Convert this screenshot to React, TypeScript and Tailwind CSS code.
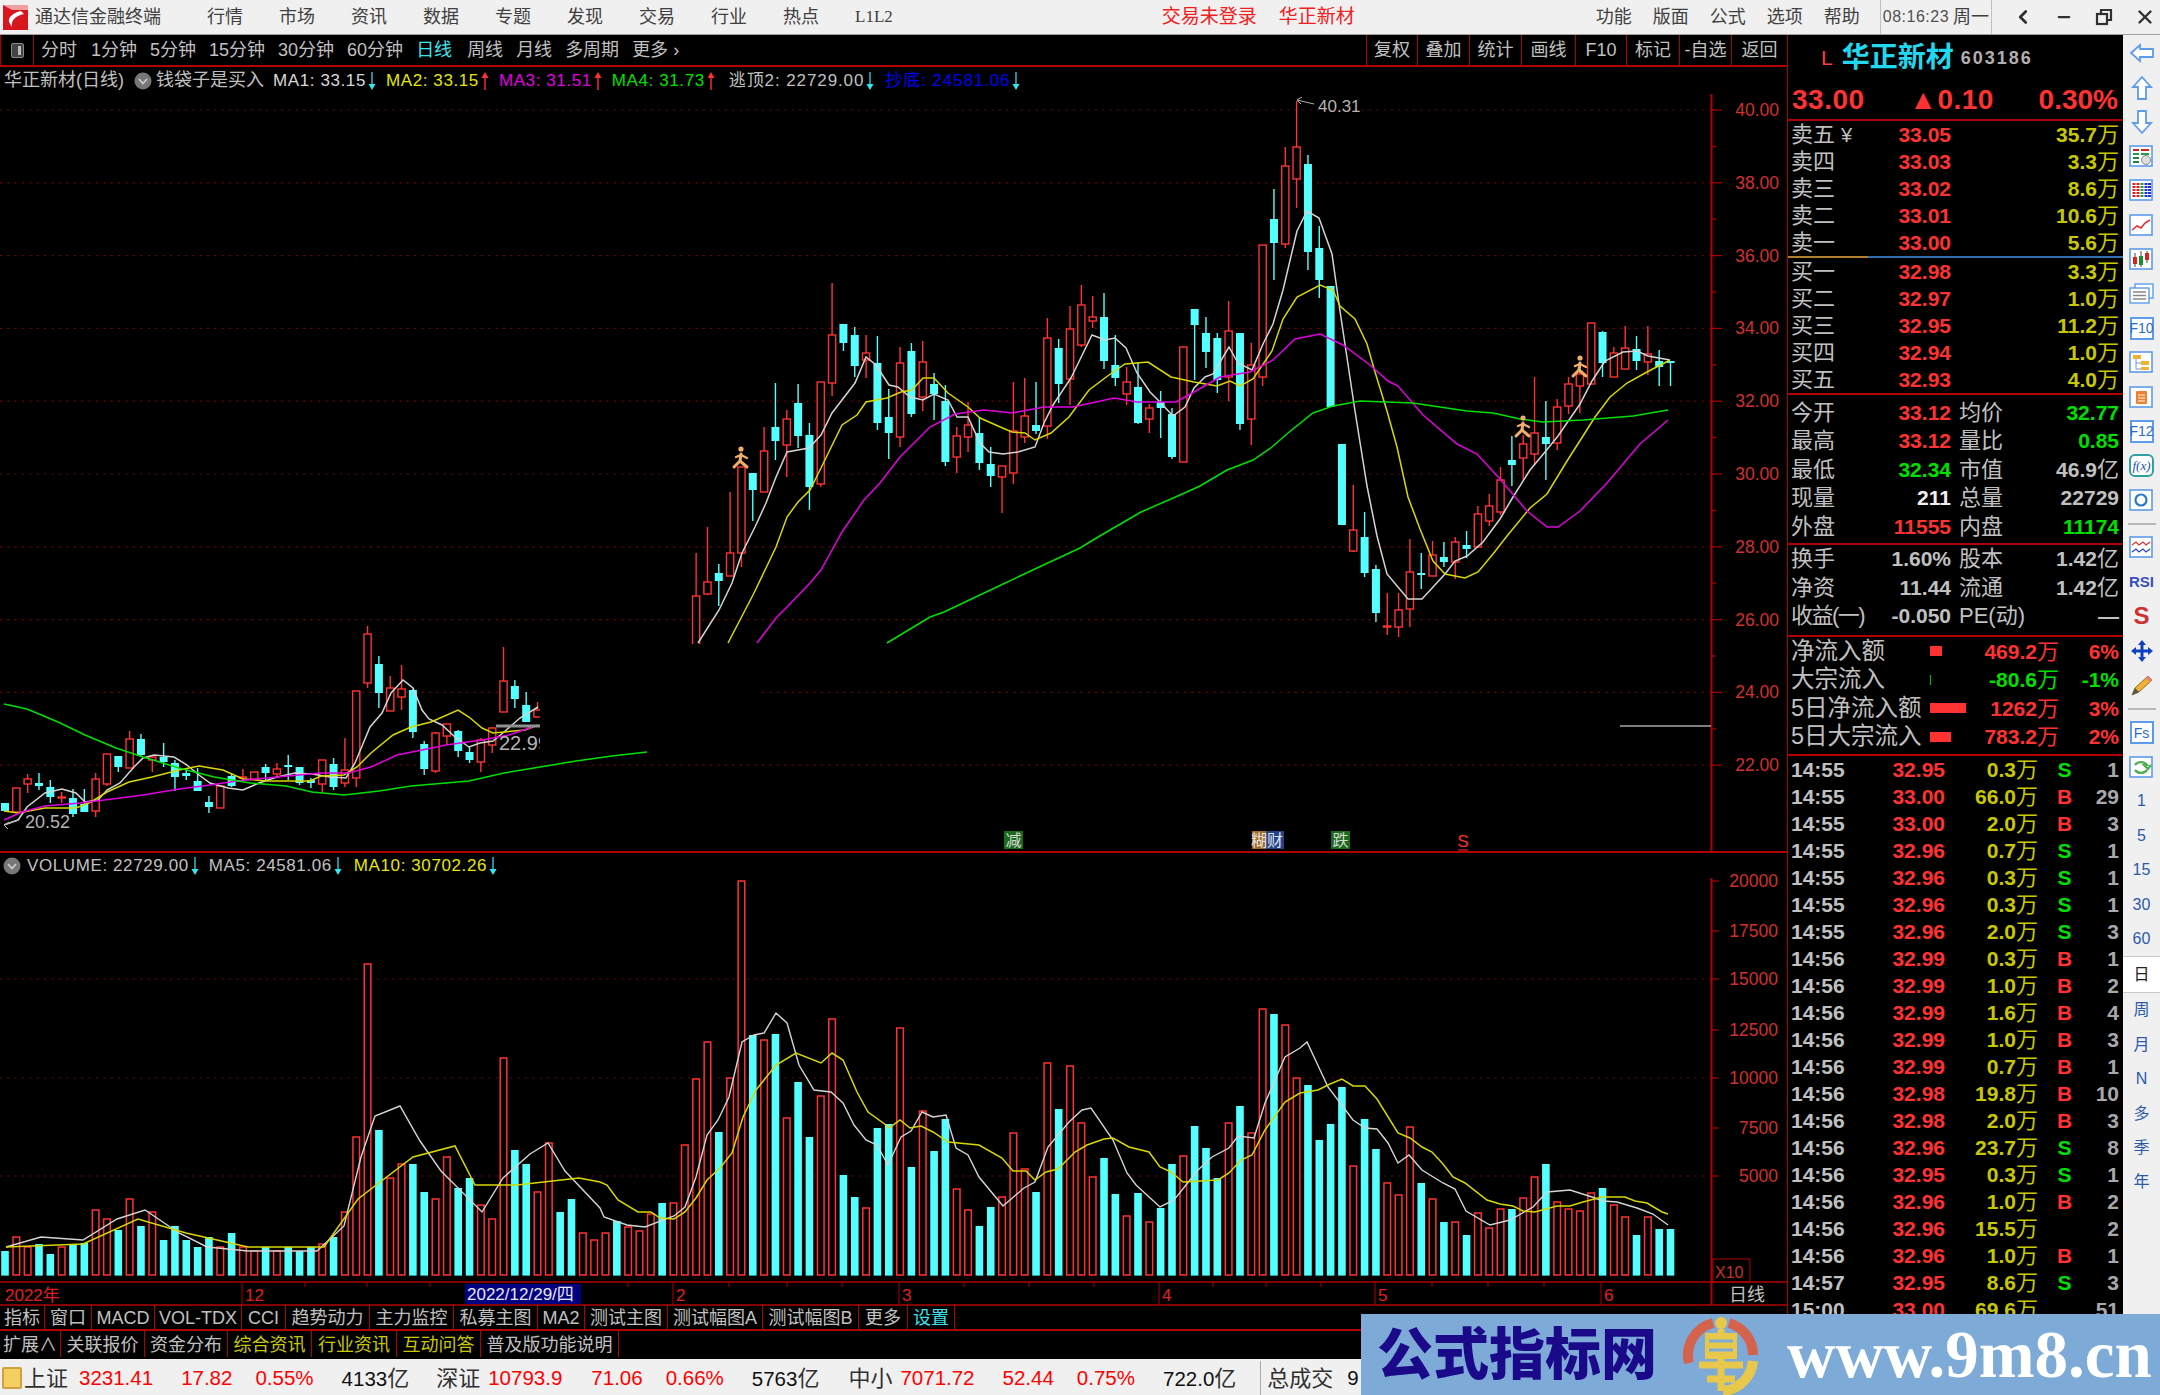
import { ChevronLeft, Minus, X as CloseIcon } from "lucide-react";
import type { ReactNode } from "react";

type Candle = [number, number, number, number, "r" | "c"] | null;

const RED = "#ff3232";
const CYAN = "#54ffff";
const AXIS = "#b00000";

const xAt = (i: number) => 5 + i * 11.33;

// pixel rows: wick top, body top, body bottom, wick bottom
const candles: Candle[] = [
  [803, 803, 811, 811, "c"], [788, 788, 812, 812, "r"], [774, 779, 784, 793, "r"], [773, 783, 786, 790, "c"],
  [780, 787, 797, 803, "c"], [792, 797, 798, 803, "r"], [789, 798, 814, 817, "c"], [789, 804, 812, 812, "c"],
  [773, 779, 811, 817, "r"], [754, 754, 784, 786, "r"], [756, 756, 767, 772, "c"], [731, 739, 768, 768, "r"],
  [734, 739, 755, 757, "c"], [755, 757, 760, 772, "r"], [743, 757, 762, 767, "c"], [760, 763, 777, 791, "c"],
  [768, 773, 776, 780, "c"], [768, 781, 791, 791, "c"], [796, 802, 807, 813, "c"], [786, 786, 808, 808, "r"],
  [773, 776, 786, 787, "c"], [769, 777, 778, 780, "r"], [772, 772, 779, 779, "r"], [764, 767, 773, 780, "c"],
  [763, 769, 774, 777, "r"], [755, 765, 767, 780, "c"], [767, 767, 783, 785, "c"], [778, 780, 783, 788, "c"],
  [760, 760, 784, 793, "r"], [758, 764, 787, 790, "c"], [738, 770, 783, 787, "r"], [691, 691, 778, 787, "r"],
  [626, 634, 683, 688, "r"], [656, 664, 693, 708, "c"], [676, 688, 711, 711, "r"], [665, 689, 697, 710, "r"],
  [689, 690, 732, 738, "c"], [741, 744, 769, 775, "c"], [732, 733, 771, 773, "r"], [724, 724, 736, 745, "r"],
  [730, 731, 751, 757, "c"], [747, 752, 760, 763, "c"], [738, 740, 762, 772, "r"], [727, 728, 745, 753, "r"],
  [647, 681, 712, 712, "r"], [680, 686, 699, 708, "c"], [692, 705, 722, 722, "c"], [702, 710, 717, 717, "r"],
  null, null, null, null, null, null, null, null, null, null, null, null, null,
  [553, 596, 660, 660, "r"], [527, 582, 594, 595, "r"], [564, 573, 581, 606, "c"], [492, 553, 576, 576, "r"],
  [467, 467, 553, 567, "r"], [473, 473, 490, 521, "c"], [427, 451, 492, 492, "r"], [383, 427, 441, 460, "c"],
  [410, 419, 445, 477, "r"], [384, 403, 436, 448, "c"], [423, 435, 487, 510, "c"], [382, 382, 484, 487, "r"],
  [283, 335, 383, 396, "r"], [324, 324, 343, 351, "c"], [327, 335, 366, 377, "c"], [335, 353, 360, 378, "r"],
  [336, 363, 423, 430, "c"], [389, 417, 433, 459, "c"], [347, 363, 437, 447, "r"], [343, 351, 414, 417, "c"],
  [341, 362, 397, 411, "r"], [373, 384, 394, 420, "c"], [385, 401, 462, 466, "c"], [427, 436, 457, 473, "r"],
  [402, 425, 437, 452, "r"], [417, 433, 463, 470, "c"], [447, 464, 476, 487, "c"], [466, 466, 477, 513, "r"],
  [382, 431, 473, 484, "r"], [378, 416, 437, 443, "r"], [382, 425, 431, 434, "c"], [318, 338, 426, 439, "r"],
  [339, 348, 384, 403, "c"], [306, 329, 379, 405, "r"], [285, 305, 345, 347, "r"], [296, 317, 321, 328, "r"],
  [293, 317, 361, 369, "c"], [335, 365, 378, 386, "c"], [367, 382, 394, 405, "r"], [362, 387, 423, 424, "c"],
  [404, 408, 419, 433, "r"], [391, 402, 408, 438, "c"], [408, 414, 457, 459, "c"], [347, 347, 462, 462, "r"],
  [309, 309, 325, 380, "c"], [317, 333, 352, 368, "c"], [333, 338, 380, 393, "c"], [301, 331, 377, 401, "r"],
  [333, 333, 424, 430, "c"], [343, 365, 419, 445, "r"], [245, 245, 377, 386, "r"], [189, 219, 243, 280, "c"],
  [147, 166, 244, 248, "r"], [101, 147, 179, 208, "r"], [155, 164, 252, 270, "c"], [226, 248, 280, 298, "c"],
  [286, 286, 407, 407, "c"], [444, 444, 525, 525, "c"], [485, 530, 551, 552, "r"], [512, 537, 573, 577, "c"],
  [565, 569, 613, 622, "c"], [593, 626, 627, 635, "r"], [593, 610, 627, 637, "r"], [539, 572, 609, 627, "r"],
  [553, 573, 575, 589, "c"], [541, 555, 576, 576, "r"], [542, 557, 562, 567, "c"], [537, 542, 562, 579, "r"],
  [531, 545, 549, 558, "c"], [506, 514, 547, 548, "r"], [494, 506, 521, 526, "r"], [467, 480, 512, 515, "r"],
  [436, 460, 465, 486, "c"], [435, 444, 458, 481, "r"], [377, 433, 454, 465, "r"], [401, 437, 444, 480, "c"],
  [399, 407, 443, 450, "r"], [377, 384, 406, 414, "r"], [365, 374, 386, 413, "r"], [323, 323, 384, 384, "r"],
  [331, 332, 363, 377, "c"], [347, 353, 377, 377, "r"], [326, 348, 369, 369, "r"], [336, 349, 361, 370, "c"],
  [326, 354, 362, 375, "r"], [350, 361, 367, 386, "c"], [361, 361, 363, 386, "c"],
];

const volumeTops = [
  1251, 1237, 1247, 1244, 1254, 1247, 1244, 1243, 1210, 1219, 1230, 1199, 1226, 1212, 1240, 1226, 1240, 1247, 1237, 1247,
  1233, 1247, 1251, 1247, 1251, 1247, 1251, 1247, 1244, 1237, 1212, 1137, 964, 1130, 1178, 1164, 1164, 1192, 1199, 1157,
  1188, 1178, 1205, 1219, 1058, 1150, 1164, 1192, 1143, 1212, 1199, 1233, 1240, 1233, 1221, 1227, 1231, 1214, 1203, 1203,
  1145, 1079, 1042, 1132, 1078, 881, 1035, 1040, 1034, 1118, 1082, 1137, 1096, 1019, 1175, 1197, 1208, 1128, 1124, 1028,
  1167, 1111, 1151, 1119, 1189, 1210, 1226, 1207, 1197, 1133, 1169, 1192, 1063, 1109, 1066, 1123, 1177, 1158, 1194, 1216,
  1193, 1222, 1208, 1164, 1156, 1126, 1148, 1178, 1123, 1106, 1133, 1009, 1014, 1025, 1078, 1085, 1140, 1124, 1087, 1166,
  1119, 1149, 1183, 1195, 1127, 1183, 1199, 1222, 1222, 1235, 1213, 1228, 1209, 1209, 1198, 1177, 1164, 1202, 1209, 1211,
  1193, 1188, 1205, 1217, 1235, 1217, 1229, 1229,
];

// the days hidden behind the erased part of the price pane still have volume bars
const hiddenDayColors = "rccrrrcrrrcrr";

const priceLines = [
  {
    color: "#d4d4d4",
    parts: [
      "4,825 18,820 27,807 45,793 62,789 76,793 85,802 98,800 107,790 120,783 134,767 143,758 154,755 174,757 187,765 199,775 210,783 228,788 243,790 259,783 277,777 295,773 312,774 330,777 346,778 355,763 370,727 382,713 391,693 403,680 413,688 422,710 429,719 442,725 455,737 469,747 480,743 493,741 504,732 520,718 538,707",
      "698,643 719,610 732,583 742,553 755,527 766,503 776,477 787,452 809,448 821,435 832,413 855,383 866,357 876,365 889,385 898,387 910,397 923,400 934,394 948,400 957,417 968,417 980,443 989,452 1003,454 1018,452 1035,447 1044,423 1053,405 1071,378 1092,335 1105,340 1115,338 1126,348 1137,373 1150,392 1160,402 1173,416 1185,407 1194,388 1205,377 1213,374 1229,347 1238,363 1252,370 1263,344 1273,324 1283,290 1297,231 1307,211 1319,218 1332,254 1340,311 1355,411 1367,486 1377,536 1387,574 1408,599 1422,599 1445,574 1455,561 1467,556 1483,542 1500,519 1513,497 1530,470 1545,452 1558,436 1580,404 1592,381 1605,361 1623,352 1637,351 1648,356 1670,360",
    ],
  },
  {
    color: "#d8d800",
    parts: [
      "4,811 18,813 45,808 76,808 91,802 107,792 129,782 152,777 179,770 199,766 223,770 243,779 268,781 310,781 321,776 344,775 357,767 371,753 393,735 411,727 431,722 458,710 469,717 482,728 493,733 525,730 538,725",
      "728,643 741,618 753,595 766,568 776,547 787,517 798,502 810,490 821,468 842,425 857,415 866,402 887,398 901,392 912,390 923,378 934,378 948,393 968,407 980,418 998,426 1012,432 1025,433 1035,440 1051,433 1069,417 1089,390 1109,375 1125,364 1148,362 1171,377 1194,382 1217,386 1230,381 1240,386 1253,379 1272,351 1283,319 1297,297 1320,285 1333,290 1340,306 1355,319 1367,344 1375,372 1387,411 1397,447 1408,497 1420,529 1433,561 1445,574 1465,578 1478,572 1493,554 1507,536 1530,508 1547,494 1567,461 1583,436 1595,417 1610,397 1627,383 1647,372 1670,360",
    ],
  },
  {
    color: "#e000e0",
    parts: [
      "4,820 22,812 45,806 80,803 112,799 143,795 179,789 210,785 237,781 277,777 321,773 348,773 371,767 397,755 422,750 446,745 482,740 509,735 538,725",
      "757,643 776,618 787,607 810,583 821,570 842,532 864,500 880,483 900,457 930,427 955,414 984,410 1012,413 1044,407 1073,407 1114,398 1137,402 1176,402 1194,392 1220,377 1250,372 1273,360 1295,339 1320,334 1343,345 1370,365 1388,381 1398,386 1423,415 1457,444 1477,454 1500,479 1527,511 1547,527 1558,527 1580,511 1607,483 1640,444 1668,420",
    ],
  },
  {
    color: "#00e000",
    parts: [
      "4,704 27,709 58,722 85,735 116,748 143,757 179,768 214,777 250,783 286,786 312,792 344,795 379,791 411,786 469,781 504,773 540,767 576,761 612,756 647,752",
      "887,643 930,617 944,612 1001,585 1037,568 1080,548 1098,537 1141,512 1180,495 1200,486 1227,470 1253,460 1272,447 1288,433 1313,413 1333,406 1360,401 1413,403 1433,406 1467,411 1493,413 1520,419 1543,422 1583,420 1633,416 1668,410",
    ],
  },
];

const volumeWhite =
  "6,1247 41,1237 83,1240 117,1219 145,1210 179,1233 207,1247 248,1251 317,1251 344,1226 361,1157 375,1116 400,1106 420,1141 441,1171 482,1212 503,1178 530,1154 548,1143 565,1171 600,1208 604,1217 627,1225 645,1227 674,1216 685,1207 696,1177 707,1135 718,1120 729,1097 742,1042 754,1035 764,1033 776,1013 787,1023 799,1065 814,1090 831,1092 843,1103 854,1125 866,1140 877,1145 888,1165 901,1137 911,1131 922,1112 933,1117 946,1115 956,1148 968,1155 979,1177 1003,1206 1024,1188 1035,1182 1048,1147 1069,1122 1082,1110 1091,1108 1113,1140 1127,1173 1136,1185 1160,1207 1174,1200 1198,1170 1212,1157 1229,1148 1238,1136 1254,1138 1265,1103 1285,1057 1300,1048 1307,1042 1328,1087 1353,1120 1365,1128 1377,1129 1388,1143 1398,1163 1409,1155 1422,1170 1443,1183 1455,1189 1466,1211 1490,1225 1510,1220 1533,1207 1547,1192 1570,1190 1592,1197 1603,1201 1617,1202 1637,1208 1653,1214 1668,1225";

const volumeYellow =
  "6,1247 83,1244 138,1219 186,1233 248,1247 324,1247 358,1199 413,1157 455,1146 475,1185 517,1185 579,1178 600,1182 607,1185 618,1200 638,1212 651,1212 660,1218 674,1219 685,1212 696,1198 707,1180 720,1168 732,1153 743,1117 756,1090 776,1065 796,1053 821,1063 832,1053 843,1060 857,1092 868,1112 886,1125 889,1128 900,1120 910,1128 921,1126 933,1132 948,1142 979,1145 1002,1158 1013,1171 1026,1171 1035,1180 1046,1172 1058,1169 1075,1152 1087,1145 1104,1139 1113,1138 1129,1147 1149,1152 1160,1167 1171,1172 1183,1182 1218,1180 1229,1173 1241,1160 1252,1155 1265,1130 1285,1102 1300,1093 1318,1090 1330,1084 1342,1079 1353,1086 1365,1086 1377,1099 1398,1133 1410,1138 1422,1147 1432,1152 1443,1164 1453,1177 1465,1183 1487,1200 1500,1204 1513,1206 1523,1211 1535,1212 1557,1206 1570,1206 1583,1202 1602,1197 1625,1197 1635,1201 1647,1203 1662,1212 1668,1214";

const priceLabels = [40, 38, 36, 34, 32, 30, 28, 26, 24, 22];
const priceY = (p: number) => 110 + (40 - p) * 36.4;

function Arrow({ up }: { up?: boolean }) {
  return (
    <svg width="8" height="20" viewBox="0 0 8 20" className="ml-[2px] shrink-0">
      {up ? (
        <>
          <path d="M4 5 V19" stroke="#ff3030" strokeWidth="1.4" />
          <path d="M0.5 7 L4 1 L7.5 7 Z" fill="#ff3030" />
        </>
      ) : (
        <>
          <path d="M4 1 V15" stroke="#30c8e0" strokeWidth="1.4" />
          <path d="M0.5 13 L4 19 L7.5 13 Z" fill="#30e8f0" />
        </>
      )}
    </svg>
  );
}

function Toggle() {
  return (
    <svg width="18" height="18" viewBox="0 0 18 18" className="shrink-0">
      <circle cx="9" cy="9" r="8.5" fill="#777" />
      <path d="M5 7 L9 11.5 L13 7" stroke="#ccc" strokeWidth="1.8" fill="none" />
    </svg>
  );
}

function Runner({ x, y }: { x: number; y: number }) {
  return (
    <g transform={`translate(${x} ${y})`} stroke="#f2ae68" fill="none" strokeWidth="3" strokeLinecap="round">
      <circle cx="0" cy="-9" r="2.6" fill="#f2ae68" strokeWidth="0" />
      <path d="M0 -4 L-1 3 L-7 9" />
      <path d="M-1 3 L6 9" />
      <path d="M-5 -1 L0 -3 L6 0" strokeWidth="2.4" />
    </g>
  );
}

function PriceChart() {
  return (
    <svg width="1787" height="757" viewBox="0 94 1787 757" className="block">
      {priceLabels.map((p) => (
        <path key={p} d={`M0 ${priceY(p)} H1711`} stroke="#8c0000" strokeWidth="1.2" strokeDasharray="1.6 5.8" />
      ))}
      <path d="M1711.5 94 V851" stroke={AXIS} strokeWidth="2" />
      {Array.from({ length: 20 }, (_, n) => 110 + n * 36.4 - 36.4).map((y, n) => (
        <path key={y} d={`M1711 ${y} H${n % 2 === 1 ? 1722 : 1716}`} stroke={AXIS} strokeWidth="1.2" />
      ))}
      {priceLabels.map((p) => (
        <text key={p} x="1779" y={priceY(p) + 6} textAnchor="end" fontSize="17.5" fill="#d03030">
          {p.toFixed(2)}
        </text>
      ))}
      {candles.map((c, i) => {
        if (!c) return null;
        const [hi, top, bottom, lo, kind] = c;
        const x = xAt(i);
        const color = kind === "r" ? RED : CYAN;
        return (
          <g key={i}>
            <path d={`M${x} ${hi} V${top} M${x} ${bottom} V${lo}`} stroke={color} strokeWidth="1.4" />
            {kind === "r" ? (
              <rect x={x - 3.6} y={top} width="7.2" height={Math.max(bottom - top, 1)} fill="#000" stroke={color} strokeWidth="1.4" />
            ) : (
              <rect x={x - 4} y={top} width="8" height={Math.max(bottom - top, 1.5)} fill={color} />
            )}
          </g>
        );
      })}
      {priceLines.map((line) =>
        line.parts.map((pts) => <polyline key={pts} points={pts} fill="none" stroke={line.color} strokeWidth="1.5" />),
      )}
      <path d="M496 726 H540" stroke="#909090" strokeWidth="3" />
      <text x="499" y="750" fontSize="20" fill="#b4b4b4">22.99</text>
      <rect x="540" y="644" width="220" height="95" fill="#000" />
      <rect x="540" y="739" width="30" height="16" fill="#000" />
      <path d="M4 825 L20 819 M4 825 L9 822 M4 825 L8 829" stroke="#b4b4b4" strokeWidth="1" fill="none" />
      <text x="25" y="828" fontSize="18" fill="#b4b4b4">20.52</text>
      <path d="M1297 100 L1314 104 M1297 100 L1302 97 M1297 100 L1301 104" stroke="#b4b4b4" strokeWidth="1" fill="none" />
      <text x="1318" y="112" fontSize="17" fill="#b4b4b4">40.31</text>
      <path d="M1620 726 H1711" stroke="#a8a8a8" strokeWidth="1.6" />
      <Runner x={741} y={458} />
      <Runner x={1523} y={427} />
      <Runner x={1580} y={367} />
      <path d="M1669 75 L1675 82 L1669 89 L1663 82 Z" fill="none" stroke="#8a8a8a" strokeWidth="1" />
      <rect x="1689" y="75" width="14" height="15" rx="2" fill="#444" stroke="#888" />
      <rect x="1697" y="78" width="3.5" height="9" fill="#bbb" />
      <rect x="1004" y="831" width="19" height="18" fill="#1b6b1b" />
      <text x="1013.5" y="846" textAnchor="middle" fontSize="16" fill="#d8d8d8">减</text>
      <rect x="1252" y="831" width="15" height="18" fill="#a06a20" />
      <rect x="1266" y="831" width="18" height="18" fill="#23428c" />
      <text x="1259" y="846" textAnchor="middle" fontSize="16" fill="#e6e6e6">糊</text>
      <text x="1275" y="846" textAnchor="middle" fontSize="16" fill="#e6e6e6">财</text>
      <rect x="1331" y="831" width="19" height="18" fill="#1b6b1b" />
      <text x="1340.5" y="846" textAnchor="middle" fontSize="16" fill="#d8d8d8">跌</text>
      <text x="1463" y="847" textAnchor="middle" fontSize="17" fill="#ff3030">S</text>
      <path d="M1458 850 H1468" stroke="#ff3030" />
    </svg>
  );
}

function VolumeChart() {
  const ticks = [305, 367, 430, 628, 729, 787, 842, 964, 1029, 1094, 1213, 1266, 1321, 1432, 1488, 1544];
  const months = [
    [242, "12"],
    [673, "2"],
    [899, "3"],
    [1159, "4"],
    [1375, "5"],
    [1601, "6"],
  ] as const;
  const axisLabels = [
    [881, "20000"],
    [931, "17500"],
    [979, "15000"],
    [1030, "12500"],
    [1078, "10000"],
    [1128, "7500"],
    [1176, "5000"],
  ] as const;
  return (
    <svg width="1787" height="427" viewBox="0 878 1787 427" className="block overflow-visible">
      {[979, 1078, 1176].map((y) => (
        <path key={y} d={`M0 ${y} H1711`} stroke="#8c0000" strokeWidth="1.2" strokeDasharray="1.6 5.8" />
      ))}
      {volumeTops.map((top, i) => {
        const c = candles[i];
        const red = c ? c[4] === "r" : hiddenDayColors[i - 48] === "r";
        const x = xAt(i);
        return red ? (
          <rect key={i} x={x - 3.3} y={top} width="6.6" height={1275 - top} fill="#000" stroke={RED} strokeWidth="1.5" />
        ) : (
          <rect key={i} x={x - 3.8} y={top} width="7.6" height={1275.6 - top} fill={CYAN} />
        );
      })}
      <polyline points={volumeWhite} fill="none" stroke="#d4d4d4" strokeWidth="1.4" />
      <polyline points={volumeYellow} fill="none" stroke="#d8d800" strokeWidth="1.5" />
      <path d="M1711.5 878 V1305" stroke={AXIS} strokeWidth="2" />
      <path d="M0 1282 H1787 M0 1305 H1787" stroke={AXIS} strokeWidth="1.5" />
      {axisLabels.map(([y, label]) => (
        <g key={label}>
          <path d={`M1711 ${y} H1719`} stroke={AXIS} strokeWidth="1.2" />
          <text x="1778" y={y + 6} textAnchor="end" fontSize="17.5" fill="#d03030">{label}</text>
        </g>
      ))}
      <rect x="1713" y="1259" width="37" height="23" fill="none" stroke={AXIS} />
      <text x="1715" y="1278" fontSize="16" fill="#c83030">X10</text>
      {ticks.map((x) => (
        <path key={x} d={`M${x} 1282 V1287`} stroke={AXIS} />
      ))}
      <text x="5" y="1301" fontSize="17" fill="#e02020">2022年</text>
      {months.map(([x, label]) => (
        <g key={label}>
          <path d={`M${x} 1282 V1305`} stroke={AXIS} />
          <text x={x + 3} y="1301" fontSize="17" fill="#e02020">{label}</text>
        </g>
      ))}
      <rect x="465" y="1284" width="116" height="20" fill="#000080" />
      <text x="467" y="1300" fontSize="17" fill="#e8e8e8">2022/12/29/四</text>
      <text x="1729" y="1301" fontSize="18" fill="#c0c0c0">日线</text>
    </svg>
  );
}

function Tab({ w, className = "text-[#c0c0c0]", children }: { w: string; className?: string; children: ReactNode }) {
  return <div className={`${w} ${className} flex shrink-0 items-center justify-center border-r border-[#b00000] pt-[3px] text-[18px] whitespace-nowrap`}>{children}</div>;
}

function ToolbarButton({ w, children }: { w: string; children: ReactNode }) {
  return <div className={`${w} flex items-center justify-center border-l border-[#b00000] text-[18px] text-[#c0c0c0]`}>{children}</div>;
}

function LeftPanes() {
  return (
    <div className="flex w-[1787px] shrink-0 flex-col">
      <div className="flex h-[32px] items-center justify-between border-b-2 border-[#b00000] text-[18px] text-[#c0c0c0]">
        <div className="flex h-full items-center gap-[13px]">
          <div className="flex h-full w-[34px] items-center justify-center border-x border-[#b00000]">
            <div className="relative h-[15px] w-[13px] rounded-[2px] border border-[#888] bg-[#444]">
              <div className="absolute top-[2px] right-[2px] h-[9px] w-[3px] bg-[#bbb]" />
            </div>
          </div>
          <span className="-ml-[6px]">分时</span>
          <span className="ml-[1px]">1分钟</span>
          <span>5分钟</span>
          <span>15分钟</span>
          <span>30分钟</span>
          <span>60分钟</span>
          <span className="text-[#39e6f0]">日线</span>
          <span className="ml-[2px]">周线</span>
          <span>月线</span>
          <span>多周期</span>
          <span>更多 ›</span>
        </div>
        <div className="flex h-full">
          <ToolbarButton w="w-[51px]">复权</ToolbarButton>
          <ToolbarButton w="w-[52px]">叠加</ToolbarButton>
          <ToolbarButton w="w-[52px]">统计</ToolbarButton>
          <ToolbarButton w="w-[54px]">画线</ToolbarButton>
          <ToolbarButton w="w-[51px]">F10</ToolbarButton>
          <ToolbarButton w="w-[53px]">标记</ToolbarButton>
          <ToolbarButton w="w-[52px]">-自选</ToolbarButton>
          <ToolbarButton w="w-[56px]">返回</ToolbarButton>
        </div>
      </div>
      <div className="flex h-[27px] items-center pl-[4px] text-[17px] tracking-[0.6px] whitespace-nowrap text-[#c0c0c0]">
        <span className="text-[18px] tracking-normal">华正新材(日线)</span>
        <span className="ml-[10px]"><Toggle /></span>
        <span className="ml-[4px] text-[18px] tracking-normal">钱袋子是买入</span>
        <span className="ml-[9px] flex items-center text-[#d8d8d8]">MA1: 33.15<Arrow /></span>
        <span className="ml-[10px] flex items-center text-[#e6e600]">MA2: 33.15<Arrow up /></span>
        <span className="ml-[10px] flex items-center text-[#e000e0]">MA3: 31.51<Arrow up /></span>
        <span className="ml-[10px] flex items-center text-[#00e000]">MA4: 31.73<Arrow up /></span>
        <span className="ml-[14px] flex items-center tracking-[0.9px]">逃顶2: 22729.00<Arrow /></span>
        <span className="ml-[11px] flex items-center tracking-[0.9px] text-[#0000f0]">抄底: 24581.06<Arrow /></span>
      </div>
      <PriceChart />
      <div className="h-[2px] bg-[#b00000]" />
      <div className="flex h-[25px] items-center pl-[3px] text-[17px] tracking-[0.6px] whitespace-nowrap text-[#c0c0c0]">
        <Toggle />
        <span className="ml-[6px] flex items-center">VOLUME: 22729.00<Arrow /></span>
        <span className="ml-[10px] flex items-center">MA5: 24581.06<Arrow /></span>
        <span className="ml-[12px] flex items-center text-[#e6e600]">MA10: 30702.26<Arrow /></span>
      </div>
      <VolumeChart />
      <div className="flex h-[26px] border-b-2 border-[#b00000]">
        <Tab w="w-[45px]">指标</Tab>
        <Tab w="w-[47px]">窗口</Tab>
        <Tab w="w-[63px]">MACD</Tab>
        <Tab w="w-[87px]">VOL-TDX</Tab>
        <Tab w="w-[44px]">CCI</Tab>
        <Tab w="w-[84px]">趋势动力</Tab>
        <Tab w="w-[84px]">主力监控</Tab>
        <Tab w="w-[84px]">私募主图</Tab>
        <Tab w="w-[47px]">MA2</Tab>
        <Tab w="w-[83px]">测试主图</Tab>
        <Tab w="w-[95px]">测试幅图A</Tab>
        <Tab w="w-[96px]">测试幅图B</Tab>
        <Tab w="w-[49px]">更多</Tab>
        <Tab w="w-[47px]" className="text-[#39e6f0]">设置</Tab>
      </div>
      <div className="flex h-[26px]">
        <Tab w="w-[61px]">扩展∧</Tab>
        <Tab w="w-[84px]">关联报价</Tab>
        <Tab w="w-[83px]">资金分布</Tab>
        <Tab w="w-[84px]" className="text-[#c8c800]">综合资讯</Tab>
        <Tab w="w-[85px]" className="text-[#c8c800]">行业资讯</Tab>
        <Tab w="w-[84px]" className="text-[#c8c800]">互动问答</Tab>
        <Tab w="w-[138px]">普及版功能说明</Tab>
      </div>
    </div>
  );
}

function Wan({ value, className = "text-[#c8c800]" }: { value: string; className?: string }) {
  return (
    <span className={`${className} font-bold`}>
      {value}
      <span className="text-[22px] font-normal">万</span>
    </span>
  );
}

function QuoteRow({ label, price, size, mark }: { label: string; price: string; size: string; mark?: string }) {
  return (
    <div className="flex h-[27px] items-center pr-[4px] pl-[3px] text-[21px]">
      <div className="flex w-[160px] shrink-0 items-center justify-between">
        <span className="text-[22px] text-[#c0c0c0]">
          {label}
          {mark && <span className="ml-[6px] text-[20px]">{mark}</span>}
        </span>
        <span className="font-bold text-[#ff3232]">{price}</span>
      </div>
      <div className="flex-1 text-right">
        <Wan value={size} />
      </div>
    </div>
  );
}

function StatRow({ a, av, ac, b, bv, bc }: { a: ReactNode; av: string; ac: string; b: string; bv: ReactNode; bc: string }) {
  return (
    <div className="flex h-[28.5px] items-center pr-[4px] pl-[3px] text-[21px]">
      <div className="flex w-[160px] shrink-0 items-center justify-between">
        <span className="text-[22px] whitespace-nowrap text-[#c0c0c0]">{a}</span>
        <span className={`${ac} font-bold`}>{av}</span>
      </div>
      <div className="flex flex-1 items-center justify-between pl-[8px]">
        <span className="text-[22px] whitespace-nowrap text-[#c0c0c0]">{b}</span>
        <span className={`${bc} font-bold`}>{bv}</span>
      </div>
    </div>
  );
}

const Yi = ({ v }: { v: string }) => (
  <>
    {v}
    <span className="text-[22px] font-normal">亿</span>
  </>
);

function FlowRow({ label, bar, barClass, value, pct, color }: { label: string; bar: string; barClass: string; value: string; pct: string; color: string }) {
  return (
    <div className="flex h-[28.5px] items-center pr-[4px] pl-[3px] text-[21px]">
      <span className="w-[139px] shrink-0 text-[23.5px] whitespace-nowrap text-[#c0c0c0]">{label}</span>
      <div className="flex w-[42px] shrink-0 items-center">
        <div className={`${bar} ${barClass}`} />
      </div>
      <div className="flex-1 text-right">
        <Wan value={value} className={color} />
      </div>
      <span className={`${color} w-[60px] shrink-0 text-right font-bold`}>{pct}</span>
    </div>
  );
}

const trades: [string, string, string, string, string][] = [
  ["14:55", "32.95", "0.3", "S", "1"],
  ["14:55", "33.00", "66.0", "B", "29"],
  ["14:55", "33.00", "2.0", "B", "3"],
  ["14:55", "32.96", "0.7", "S", "1"],
  ["14:55", "32.96", "0.3", "S", "1"],
  ["14:55", "32.96", "0.3", "S", "1"],
  ["14:55", "32.96", "2.0", "S", "3"],
  ["14:56", "32.99", "0.3", "B", "1"],
  ["14:56", "32.99", "1.0", "B", "2"],
  ["14:56", "32.99", "1.6", "B", "4"],
  ["14:56", "32.99", "1.0", "B", "3"],
  ["14:56", "32.99", "0.7", "B", "1"],
  ["14:56", "32.98", "19.8", "B", "10"],
  ["14:56", "32.98", "2.0", "B", "3"],
  ["14:56", "32.96", "23.7", "S", "8"],
  ["14:56", "32.95", "0.3", "S", "1"],
  ["14:56", "32.96", "1.0", "B", "2"],
  ["14:56", "32.96", "15.5", "", "2"],
  ["14:56", "32.96", "1.0", "B", "1"],
  ["14:57", "32.95", "8.6", "S", "3"],
  ["15:00", "33.00", "69.6", "", "51"],
];

function QuotePanel() {
  return (
    <div className="flex w-[336px] shrink-0 flex-col overflow-hidden border-l border-[#b00000]">
      <div className="flex h-[46px] shrink-0 items-center pl-[33px]">
        <span className="text-[21px] text-[#ff3c3c]">L</span>
        <span className="ml-[9px] text-[28px] font-bold text-[#22d8ee]">华正新材</span>
        <span className="ml-[7px] text-[18px] font-bold tracking-[2px] text-[#b0b0b0]">603186</span>
      </div>
      <div className="flex h-[40px] shrink-0 items-center justify-between border-b-2 border-[#b00000] pr-[5px] pl-[4px] text-[28px] font-bold text-[#ff3232]">
        <span className="tracking-[0.5px]">33.00</span>
        <span className="tracking-[0.5px]">▲0.10</span>
        <span>0.30%</span>
      </div>
      <QuoteRow label="卖五" mark="¥" price="33.05" size="35.7" />
      <QuoteRow label="卖四" price="33.03" size="3.3" />
      <QuoteRow label="卖三" price="33.02" size="8.6" />
      <QuoteRow label="卖二" price="33.01" size="10.6" />
      <QuoteRow label="卖一" price="33.00" size="5.6" />
      <div className="flex h-[2px] shrink-0">
        <div className="w-[80px] bg-[#b08030]" />
        <div className="flex-1 bg-[#3070b0]" />
      </div>
      <QuoteRow label="买一" price="32.98" size="3.3" />
      <QuoteRow label="买二" price="32.97" size="1.0" />
      <QuoteRow label="买三" price="32.95" size="11.2" />
      <QuoteRow label="买四" price="32.94" size="1.0" />
      <QuoteRow label="买五" price="32.93" size="4.0" />
      <div className="h-[2px] shrink-0 bg-[#b00000]" />
      <div className="h-[3px] shrink-0" />
      <StatRow a="今开" av="33.12" ac="text-[#ff3232]" b="均价" bv="32.77" bc="text-[#00e000]" />
      <StatRow a="最高" av="33.12" ac="text-[#ff3232]" b="量比" bv="0.85" bc="text-[#00e000]" />
      <StatRow a="最低" av="32.34" ac="text-[#00e000]" b="市值" bv={<Yi v="46.9" />} bc="text-[#c0c0c0]" />
      <StatRow a="现量" av="211" ac="text-[#f0f0f0]" b="总量" bv="22729" bc="text-[#c0c0c0]" />
      <StatRow a="外盘" av="11555" ac="text-[#ff3232]" b="内盘" bv="11174" bc="text-[#00e000]" />
      <div className="mt-[2px] h-[2px] shrink-0 bg-[#b00000]" />
      <StatRow a="换手" av="1.60%" ac="text-[#c0c0c0]" b="股本" bv={<Yi v="1.42" />} bc="text-[#c0c0c0]" />
      <StatRow a="净资" av="11.44" ac="text-[#c0c0c0]" b="流通" bv={<Yi v="1.42" />} bc="text-[#c0c0c0]" />
      <StatRow a={<span className="tracking-[-1.5px]">收益(一)</span>} av="-0.050" ac="text-[#c0c0c0]" b="PE(动)" bv="—" bc="text-[#c0c0c0]" />
      <div className="mt-[5px] h-[2px] shrink-0 bg-[#b00000]" />
      <FlowRow label="净流入额" bar="h-[10px] w-[12px]" barClass="bg-[#ff3232]" value="469.2" pct="6%" color="text-[#ff3232]" />
      <FlowRow label="大宗流入" bar="h-[10px] w-[1px]" barClass="bg-[#00c000]" value="-80.6" pct="-1%" color="text-[#00e000]" />
      <FlowRow label="5日净流入额" bar="h-[10px] w-[36px]" barClass="bg-[#ff3232]" value="1262" pct="3%" color="text-[#ff3232]" />
      <FlowRow label="5日大宗流入" bar="h-[10px] w-[21px]" barClass="bg-[#ff3232]" value="783.2" pct="2%" color="text-[#ff3232]" />
      <div className="mt-[3px] h-[2px] shrink-0 bg-[#b00000]" />
      {trades.map(([time, price, vol, side, n], i) => (
        <div key={i} className="flex h-[27px] shrink-0 items-center pr-[4px] pl-[3px] text-[21px] font-bold">
          <span className="w-[62px] text-[#c0c0c0]">{time}</span>
          <span className="w-[92px] text-right text-[#ff3232]">{price}</span>
          <span className="w-[93px] text-right">
            <Wan value={vol} />
          </span>
          <span className={`w-[53px] text-center ${side === "S" ? "text-[#00e000]" : "text-[#ff3232]"}`}>{side}</span>
          <span className="flex-1 text-right text-[#a8a8a8]">{n}</span>
        </div>
      ))}
    </div>
  );
}

function Arrow3D({ d }: { d: string }) {
  return (
    <svg width="26" height="26" viewBox="0 0 26 26">
      <path d={d} fill="#fff" stroke="#5d9cec" strokeWidth="1.8" />
    </svg>
  );
}

function Frame({ children }: { children: ReactNode }) {
  return (
    <svg width="25" height="25" viewBox="0 0 25 25">
      <rect x="1" y="2" width="22" height="20" fill="#fff" stroke="#5d9cec" strokeWidth="1.6" />
      {children}
    </svg>
  );
}

function FrameText({ children }: { children: ReactNode }) {
  return (
    <div className="flex h-[23px] w-[24px] items-center justify-center border-2 border-[#5d9cec] bg-white text-[14px] leading-none text-[#2a6cc8]">
      {children}
    </div>
  );
}

function Divider() {
  return <div className="my-[5.5px] h-[2px] w-[28px] shrink-0 bg-[#b8b8b8]" />;
}

function Slot({ children }: { children: ReactNode }) {
  return <div className="flex h-[34.4px] shrink-0 items-center justify-center">{children}</div>;
}

function SideToolbar() {
  return (
    <div className="flex flex-1 flex-col items-center bg-[#f0f0f0] pt-[1px] text-[16px] text-[#2a5aa8]">
      <Slot><Arrow3D d="M2 13 L11 5 V9 H24 V17 H11 V21 Z" /></Slot>
      <Slot><Arrow3D d="M13 2 L22 12 H17 V24 H9 V12 H4 Z" /></Slot>
      <Slot><Arrow3D d="M13 24 L22 14 H17 V2 H9 V14 H4 Z" /></Slot>
      <Slot>
        <Frame>
          <path d="M4 6 H10 M12 6 H20" stroke="#d02020" strokeWidth="2" />
          <path d="M4 10 H10 M12 10 H20" stroke="#20a040" strokeWidth="2" />
          <path d="M4 14 H10 M4 18 H10" stroke="#208040" strokeWidth="2" />
          <circle cx="17" cy="16" r="4.5" fill="#ddd" stroke="#888" />
        </Frame>
      </Slot>
      <Slot>
        <Frame>
          <path d="M5 5 V20 M9 5 V20" stroke="#d02020" strokeWidth="3" strokeDasharray="2 1" />
          <path d="M13 5 V20" stroke="#20a040" strokeWidth="3" strokeDasharray="2 1" />
          <path d="M17 5 V20 M20.5 5 V20" stroke="#2030d0" strokeWidth="3" strokeDasharray="2 1" />
        </Frame>
      </Slot>
      <Slot>
        <Frame>
          <path d="M3 17 L8 13 L12 15 L16 10 L21 7" stroke="#e03030" strokeWidth="1.6" fill="none" />
        </Frame>
      </Slot>
      <Slot>
        <Frame>
          <path d="M6 6 V20 M12 4 V20 M18 4 V16" stroke="#444" />
          <rect x="4" y="10" width="4" height="7" fill="#e02020" />
          <rect x="10" y="9" width="4" height="9" fill="#109030" />
          <rect x="16" y="6" width="4" height="7" fill="#e02020" />
        </Frame>
      </Slot>
      <Slot>
        <svg width="25" height="25" viewBox="0 0 25 25">
          <rect x="6" y="3" width="18" height="14" fill="#fff" stroke="#5d9cec" strokeWidth="1.4" />
          <rect x="1" y="7" width="19" height="15" fill="#fff" stroke="#5d9cec" strokeWidth="1.4" />
          <path d="M4 11 H17 M4 14.5 H17 M4 18 H17" stroke="#888" strokeWidth="1.6" />
        </svg>
      </Slot>
      <Slot><FrameText>F10</FrameText></Slot>
      <Slot>
        <Frame>
          <rect x="4" y="5" width="8" height="4" fill="#f0b030" />
          <rect x="12" y="11" width="8" height="4" fill="#f0b030" />
          <rect x="12" y="17" width="8" height="3" fill="#f0b030" />
          <path d="M7 9 V19 H12 M7 13 H12" stroke="#5d9cec" fill="none" />
        </Frame>
      </Slot>
      <Slot>
        <Frame>
          <rect x="7" y="6" width="11" height="13" rx="1" fill="#f08030" />
          <path d="M9 10 H16 M9 13 H16 M9 16 H16" stroke="#fff" />
        </Frame>
      </Slot>
      <Slot><FrameText>F12</FrameText></Slot>
      <Slot>
        <div className="flex h-[23px] w-[25px] items-center justify-center rounded-[6px] border-2 border-[#30a0a0] bg-white font-['Liberation_Serif'] text-[13px] text-[#2050b0] italic">f(x)</div>
      </Slot>
      <Slot>
        <Frame>
          <circle cx="12" cy="12" r="5.5" fill="none" stroke="#2a7ac8" strokeWidth="2.2" />
        </Frame>
      </Slot>
      <Divider />
      <Slot>
        <Frame>
          <path d="M3 10 L7 7 L10 10 L14 7 L17 10 L21 7" stroke="#e03030" fill="none" strokeWidth="1.3" />
          <path d="M3 17 L7 14 L10 17 L14 14 L17 17 L21 14" stroke="#3040d0" fill="none" strokeWidth="1.3" />
        </Frame>
      </Slot>
      <Slot><span className="text-[15px] font-bold text-[#3a50b8]">RSI</span></Slot>
      <Slot><span className="text-[24px] leading-none font-bold text-[#d03030]">S</span></Slot>
      <Slot>
        <svg width="24" height="24" viewBox="0 0 24 24" fill="#1040c0">
          <path d="M12 1 L16 6 H13.5 V10.5 H18 V8 L23 12 L18 16 V13.5 H13.5 V18 H16 L12 23 L8 18 H10.5 V13.5 H6 V16 L1 12 L6 8 V10.5 H10.5 V6 H8 Z" />
        </svg>
      </Slot>
      <Slot>
        <svg width="24" height="24" viewBox="0 0 24 24">
          <path d="M2 22 L5 15 L18 3 L22 7 L9 19 Z" fill="#f0b030" stroke="#907030" />
          <path d="M18 3 L22 7 L20 9 L16 5 Z" fill="#e88080" />
          <path d="M2 22 L5 15 L9 19 Z" fill="#555" />
        </svg>
      </Slot>
      <Divider />
      <Slot><FrameText>Fs</FrameText></Slot>
      <Slot>
        <Frame>
          <path d="M6 10 A7 6 0 0 1 18 10 L15 10 L19 14 L22 10" fill="none" stroke="#50b050" strokeWidth="2.2" />
          <path d="M18 15 A7 6 0 0 1 6 15" fill="none" stroke="#50b050" strokeWidth="2.2" />
        </Frame>
      </Slot>
      <Slot>1</Slot>
      <Slot>5</Slot>
      <Slot>15</Slot>
      <Slot>30</Slot>
      <Slot>60</Slot>
      <div className="flex h-[37px] w-full shrink-0 items-center justify-center border-y border-[#c8c8c8] bg-white text-[#202020]">日</div>
      <Slot>周</Slot>
      <Slot>月</Slot>
      <Slot>N</Slot>
      <Slot>多</Slot>
      <Slot>季</Slot>
      <Slot>年</Slot>
    </div>
  );
}

function Logo() {
  return (
    <svg width="30" height="30" viewBox="0 0 30 30" className="shrink-0">
      <rect x="3" y="3" width="25" height="25" fill="#d8141c" />
      <path d="M3 3 L28 3 L28 8 L12 8 Z" fill="#f0a0a0" />
      <path d="M21 9 C13 11 8 15 9 20 L12 25 C11 18 15 14 24 12 Z" fill="#fff" />
    </svg>
  );
}

function TitleBar() {
  return (
    <div className="flex h-[35px] shrink-0 items-center border-b border-[#a0a0a0] bg-[#f0f0f0] text-[18px] text-[#404040]">
      <Logo />
      <span className="ml-[5px] w-[172px]">通达信金融终端</span>
      <div className="flex gap-[36px]">
        <span>行情</span>
        <span>市场</span>
        <span>资讯</span>
        <span>数据</span>
        <span>专题</span>
        <span>发现</span>
        <span>交易</span>
        <span>行业</span>
        <span>热点</span>
        <span className="font-['Liberation_Serif'] text-[17px]">L1L2</span>
      </div>
      <span className="ml-[269px] text-[19px] text-[#f02020]">交易未登录</span>
      <span className="ml-[22px] text-[19px] text-[#f02020]">华正新材</span>
      <div className="ml-[241px] flex gap-[21px]">
        <span>功能</span>
        <span>版面</span>
        <span>公式</span>
        <span>选项</span>
        <span>帮助</span>
      </div>
      <div className="ml-[20px] flex h-full items-center border-x border-[#c0c0c0] px-[2px] whitespace-nowrap">
        <span className="text-[16px] tracking-[0.5px] text-[#505050]">08:16:23</span>
        <span className="ml-[4px]">周一</span>
      </div>
      <div className="flex flex-1 items-center justify-between pr-[4px] pl-[20px] text-[#303030]">
        <ChevronLeft size={22} strokeWidth={3} />
        <Minus size={18} strokeWidth={3} />
        <svg width="18" height="18" viewBox="0 0 18 18" fill="none" stroke="#303030" strokeWidth="2.2">
          <rect x="2" y="6" width="10" height="10" />
          <path d="M6 5 V2 H16 V12 H13" />
        </svg>
        <CloseIcon size={22} strokeWidth={2.6} />
      </div>
    </div>
  );
}

function StatusBar() {
  return (
    <div className="flex h-[36px] shrink-0 items-center overflow-hidden bg-[#f0f0f0] pt-[2px] pl-[2px] text-[20.5px] whitespace-nowrap text-[#ff0000]">
      <div className="h-[22px] w-[20px] shrink-0 rounded-[2px] border-2 border-[#d0a040] bg-[#f4d060]" />
      <span className="ml-[2px] text-[22px] text-[#303030]">上证</span>
      <span className="ml-[11px]">3231.41</span>
      <span className="ml-[28px]">17.82</span>
      <span className="ml-[23px]">0.55%</span>
      <span className="ml-[28px] text-[#101010]">4133<span className="text-[22px] text-[#303030]">亿</span></span>
      <span className="ml-[27px] text-[22px] text-[#303030]">深证</span>
      <span className="ml-[8px]">10793.9</span>
      <span className="ml-[29px]">71.06</span>
      <span className="ml-[23px]">0.66%</span>
      <span className="ml-[28px] text-[#101010]">5763<span className="text-[22px] text-[#303030]">亿</span></span>
      <span className="ml-[29px] text-[22px] text-[#303030]">中小</span>
      <span className="ml-[8px]">7071.72</span>
      <span className="ml-[28px]">52.44</span>
      <span className="ml-[23px]">0.75%</span>
      <span className="ml-[28px] text-[#101010]">722.0<span className="text-[22px] text-[#303030]">亿</span></span>
      <div className="ml-[24px] h-full w-[1px] bg-[#a8a8a8]" />
      <span className="ml-[6px] text-[22px] text-[#303030]">总成交</span>
      <span className="ml-[14px] text-[#101010]">9</span>
    </div>
  );
}

function Watermark() {
  return (
    <div className="absolute right-0 bottom-0 flex h-[81px] w-[799px] items-center bg-[#7eaad8]">
      <span className="ml-[16px] text-[56px] leading-none font-black whitespace-nowrap text-[#1a0a8a]">公式指标网</span>
      <svg width="80" height="80" viewBox="0 0 80 80" className="ml-[24px] shrink-0">
        <path d="M8 48 A33 33 0 0 1 32 8" fill="none" stroke="#d4634e" strokeWidth="10" />
        <path d="M48 8 A33 33 0 0 1 72 40" fill="none" stroke="#d4634e" strokeWidth="10" />
        <path d="M72 46 A33 33 0 0 1 42 76" fill="none" stroke="#e8c84a" strokeWidth="10" />
        <circle cx="40" cy="8" r="6" fill="#e8c84a" />
        <rect x="24" y="18" width="32" height="26" fill="#e8c84a" />
        <path d="M18 50 H62 M40 14 V76 M26 64 H54" stroke="#e8c84a" strokeWidth="7" />
        <path d="M28 26 H52 M28 35 H52" stroke="#7eaad8" strokeWidth="3" />
      </svg>
      <span className="ml-[26px] font-['Liberation_Serif'] text-[67px] leading-none font-bold whitespace-nowrap text-white">www.9m8.cn</span>
    </div>
  );
}

export default function App() {
  return (
    <div className="relative flex h-[1395px] w-[2160px] flex-col overflow-hidden bg-black font-['Liberation_Sans','Noto_Sans_CJK_SC',sans-serif]">
      <TitleBar />
      <div className="flex min-h-0 flex-1">
        <LeftPanes />
        <QuotePanel />
        <SideToolbar />
      </div>
      <StatusBar />
      <Watermark />
    </div>
  );
}
